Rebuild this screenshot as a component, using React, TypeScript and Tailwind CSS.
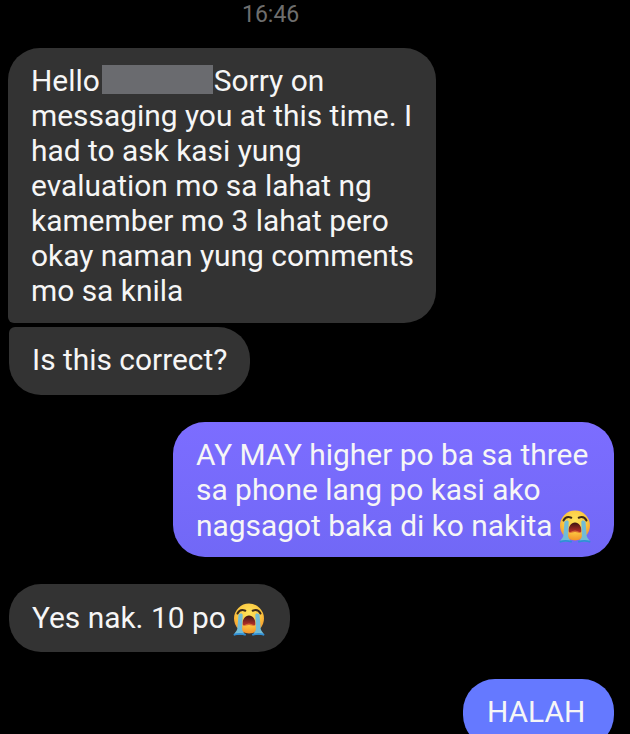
const Emoji = ({ id }: { id: string }) => (
  <svg width="34" height="34" viewBox="0 0 34 34" className="inline-block shrink-0">
    <defs>
      <radialGradient id={`f${id}`} cx="50%" cy="32%" r="68%">
        <stop offset="0%" stopColor="#fde35c" />
        <stop offset="60%" stopColor="#fcc63f" />
        <stop offset="100%" stopColor="#f3922a" />
      </radialGradient>
      <linearGradient id={`m${id}`} x1="0" y1="0" x2="0" y2="1">
        <stop offset="0%" stopColor="#3a1512" />
        <stop offset="100%" stopColor="#c0302a" />
      </linearGradient>
    </defs>
    <circle cx="17" cy="16.500" r="15" fill={`url(#f${id})`} />
    <path d="M17 13.500c-4 0-6.400 3.800-6.400 8.200 0 1.500.8 2 2 1.700 2.900-.7 5.900-.7 8.800 0 1.200.3 2-.2 2-1.700 0-4.400-2.400-8.200-6.400-8.200z" fill={`url(#m${id})`} />
    <path d="M12.500 23c2.900-1.800 6.100-1.800 9 0-2.900-.6-6.100-.6-9 0z" fill="#f6a63a" />
    <path d="M5.500 11.500c1.500-3 4.700-4 7.800-2.800M28.500 11.500c-1.500-3-4.700-4-7.800-2.800" stroke="#3c2a18" strokeWidth="2" fill="none" strokeLinecap="round" />
    <path d="M6.500 12.500l2.800-1.200 1.400 1.200-.6 14.500c.2 2.200 1.800 3.400 2.700 5.500H2c1-2 2.700-3.300 3.300-5.500z" fill="#72bcd6" />
    <path d="M27.500 12.500l-2.800-1.200-1.400 1.200.6 14.500c-.2 2.200-1.800 3.400-2.700 5.500H32c-1-2-2.700-3.300-3.300-5.500z" fill="#72bcd6" />
    <path d="M2.500 32.700c2.500-1 8-1 10.500 0M21 32.700c2.500-1 8-1 10.500 0" stroke="#2f8fd6" strokeWidth="1.800" fill="none" strokeLinecap="round" />
  </svg>
);

export default function App() {
  return (
    <div className="w-[630px] h-[734px] overflow-hidden bg-black text-[29.9px] leading-[35px] text-[#f6f6f6] font-['Roboto',sans-serif]">
      <div className="pl-[242px] pt-[1px] h-[29px] text-[23px] leading-[27px] text-[#6e6e6e]">16:46</div>

      <div className="mt-[19px] ml-[8px] w-[428px] h-[275px] rounded-[32px] rounded-bl-[6px] bg-[#333333] pl-[23px] pr-[16px] py-[15px]">
        <div className="flex items-center h-[35px]">
          <span>Hello</span>
          <span className="ml-[2px] mr-[1px] mt-[-2px] w-[111px] h-[29px] bg-[#6a6b6f]" />
          <span>Sorry on</span>
        </div>
        <div>messaging you at this time. I</div>
        <div>had to ask kasi yung</div>
        <div>evaluation mo sa lahat ng</div>
        <div>kamember mo 3 lahat pero</div>
        <div>okay naman yung comments</div>
        <div>mo sa knila</div>
      </div>

      <div className="mt-[4px] ml-[9px] w-[241px] h-[68px] rounded-[32px] rounded-tl-[6px] bg-[#333333] pl-[23px] py-[15px]">
        Is this correct?
      </div>

      <div className="mt-[27px] ml-[173px] w-[441px] h-[135px] rounded-[32px] bg-linear-to-b from-[#7c6dff] to-[#7168f6] pl-[23px] py-[15px]">
        <div>AY MAY higher po ba sa three</div>
        <div>sa phone lang po kasi ako</div>
        <div className="flex items-center">
          <span>nagsagot baka di ko nakita</span>
          <span className="ml-[5px] mt-[2px] flex"><Emoji id="a" /></span>
        </div>
      </div>

      <div className="mt-[27px] ml-[9px] w-[281px] h-[68px] rounded-[32px] bg-[#333333] pl-[23px] flex items-center">
        <span className="mt-[-1px]">Yes nak. 10 po</span>
        <span className="ml-[6px] mt-[2px] flex"><Emoji id="b" /></span>
      </div>

      <div className="mt-[27px] ml-[463px] w-[151px] h-[68px] rounded-[32px] bg-[#6579ff] pl-[24px] py-[15px]">
        HALAH
      </div>
    </div>
  );
}
